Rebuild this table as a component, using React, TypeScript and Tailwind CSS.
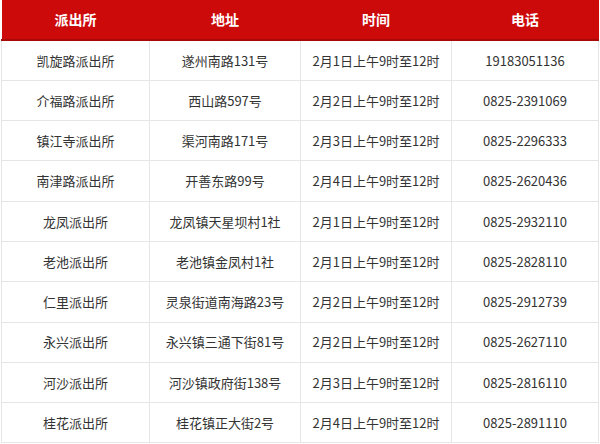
const rows = [
  ["凯旋路派出所", "遂州南路131号", "2月1日上午9时至12时", "19183051136"],
  ["介福路派出所", "西山路597号", "2月2日上午9时至12时", "0825-2391069"],
  ["镇江寺派出所", "渠河南路171号", "2月3日上午9时至12时", "0825-2296333"],
  ["南津路派出所", "开善东路99号", "2月4日上午9时至12时", "0825-2620436"],
  ["龙凤派出所", "龙凤镇天星坝村1社", "2月1日上午9时至12时", "0825-2932110"],
  ["老池派出所", "老池镇金凤村1社", "2月1日上午9时至12时", "0825-2828110"],
  ["仁里派出所", "灵泉街道南海路23号", "2月2日上午9时至12时", "0825-2912739"],
  ["永兴派出所", "永兴镇三通下街81号", "2月2日上午9时至12时", "0825-2627110"],
  ["河沙派出所", "河沙镇政府街138号", "2月3日上午9时至12时", "0825-2816110"],
  ["桂花派出所", "桂花镇正大街2号", "2月4日上午9时至12时", "0825-2891110"],
];

const headers = ["派出所", "地址", "时间", "电话"];

export default function App() {
  return (
    <div
      className="w-[600px] h-[444px] bg-white overflow-hidden px-[1px]"
      style={{ fontFamily: '"Noto Sans CJK SC", "Noto Sans", sans-serif' }}
    >
      <table className="w-[597px] border-collapse table-fixed">
        <colgroup>
          <col className="w-[148px]" />
          <col className="w-[151px]" />
          <col className="w-[151px]" />
          <col className="w-[147px]" />
        </colgroup>
        <thead>
          <tr className="h-[40px] bg-[#cc0a0a] border-b-2 border-[#a80808]">
            {headers.map((h) => (
              <th key={h} className="text-white text-[14px] font-bold text-center p-0">
                {h}
              </th>
            ))}
          </tr>
        </thead>
        <tbody>
          {rows.map((r, i) => (
            <tr key={i} className="h-[40.3px]">
              {r.map((c, j) => (
                <td
                  key={j}
                  className="border border-[#e6e6e6] text-center text-[13px] text-[#333] p-0 whitespace-nowrap"
                >
                  {c}
                </td>
              ))}
            </tr>
          ))}
        </tbody>
      </table>
    </div>
  );
}
